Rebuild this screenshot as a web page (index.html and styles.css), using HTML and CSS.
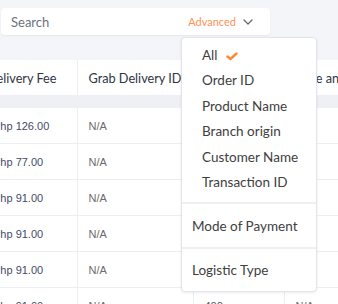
FILE: index.html
```html
<!DOCTYPE html>
<html>
<head>
<meta charset="utf-8">
<link rel="stylesheet" href="styles.css">
</head>
<body>
<div class="page">
  <div class="search">
    <span class="search-label">Search</span>
    <span class="advanced">Advanced</span>
    <svg class="chev" width="10" height="6" viewBox="0 0 10 6"><path d="M1 1 L5 5 L9 1" fill="none" stroke="#666" stroke-width="1.2" stroke-linecap="round" stroke-linejoin="round"/></svg>
  </div>

  <table class="grid">
    <colgroup>
      <col class="c1"><col class="c2"><col class="c3"><col class="c4">
    </colgroup>
    <thead>
      <tr class="head">
        <th>Delivery Fee</th><th>Grab Delivery ID</th><th>Quantity</th><th>Date and Time</th>
      </tr>
      <tr class="gap"><td colspan="4"></td></tr>
    </thead>
    <tbody>
      <tr><td class="fee">Php 126.00</td><td class="na">N/A</td><td>400</td><td class="na">N/A</td></tr>
      <tr><td class="fee">Php 77.00</td><td class="na">N/A</td><td>400</td><td class="na">N/A</td></tr>
      <tr><td class="fee">Php 91.00</td><td class="na">N/A</td><td>400</td><td class="na">N/A</td></tr>
      <tr><td class="fee">Php 91.00</td><td class="na">N/A</td><td>400</td><td class="na">N/A</td></tr>
      <tr><td class="fee">Php 91.00</td><td class="na">N/A</td><td>400</td><td class="na">N/A</td></tr>
      <tr><td class="fee">Php 91.00</td><td class="na">N/A</td><td>400</td><td class="na">N/A</td></tr>
    </tbody>
  </table>

  <div class="menu">
    <div class="group first">
      <div class="item">All <svg class="check" width="12" height="9" viewBox="0 0 12 9"><path d="M1.5 4.5 L4.5 7 L10.5 1.5" fill="none" stroke="#ff8a35" stroke-width="2.4" stroke-linecap="round" stroke-linejoin="round"/></svg></div>
      <div class="item">Order ID</div>
      <div class="item">Product Name</div>
      <div class="item">Branch origin</div>
      <div class="item">Customer Name</div>
      <div class="item">Transaction ID</div>
    </div>
    <div class="group single">
      <div class="item">Mode of Payment</div>
    </div>
    <div class="group single last">
      <div class="item">Logistic Type</div>
    </div>
  </div>
</div>
</body>
</html>
```

FILE: styles.css
```css
html, body {
  margin: 0;
  padding: 0;
}
body {
  background: #f3f5f9;
  font-family: Lato, "Noto Sans", sans-serif;
  width: 338px;
  height: 304px;
  overflow: hidden;
}
.page {
  position: relative;
  padding-top: 8px;
}
.search {
  margin-left: 1px;
  width: 269px;
  height: 27px;
  background: #fff;
  border-radius: 4px;
  box-shadow: 0 1px 2px rgba(0, 0, 0, 0.06);
  display: flex;
  align-items: center;
  box-sizing: border-box;
  padding-left: 10px;
}
.search-label {
  font-size: 13px;
  color: #6b7280;
  flex: 1;
}
.advanced {
  font-size: 11px;
  color: #ff9254;
  margin-right: 7px;
}
.chev {
  margin-right: 17px;
  margin-top: 1px;
}

.grid {
  margin-top: 25px;
  margin-left: -24px;
  border-collapse: collapse;
  table-layout: fixed;
  width: 425px;
}
.c1 { width: 101px; }
.c2 { width: 116px; }
.c3 { width: 91px; }
.c4 { width: 117px; }

.head th {
  height: 35px;
  background: #fff;
  font-weight: 400;
  font-size: 12.7px;
  color: #2f3542;
  text-align: left;
  padding: 0 0 0 11px;
  border-left: 1px solid #eceef2;
  white-space: nowrap;
  overflow: hidden;
}
.head th:first-child { border-left: none; }
.gap td {
  height: 13px;
  padding: 0;
  background: #eef0f4;
}
tbody td {
  height: 35px;
  background: #fff;
  padding: 0 0 0 11px;
  font-family: "Liberation Sans", Arial, sans-serif;
  font-size: 11px;
  color: #555;
  border-left: 1px solid #eceef2;
  border-bottom: 1px solid #eceef2;
  white-space: nowrap;
}
tbody td:first-child { border-left: none; padding-left: 17px; }
tbody td.fee { color: #3f4b66; }
tbody td.na { color: #6f6a6a; }

.menu {
  position: absolute;
  left: 181px;
  top: 37px;
  width: 136px;
  background: #fff;
  border: 1px solid #e3e5ea;
  border-radius: 4px;
  box-shadow: 0 1px 3px rgba(0, 0, 0, 0.08);
  box-sizing: border-box;
}
.group {
  border-bottom: 2px solid #eff0f3;
}
.group.last { border-bottom: none; }
.group.first {
  padding: 5px 0 7px 20px;
}
.group.first .item {
  height: 25.4px;
  line-height: 25.4px;
}
.group.single {
  padding-left: 10px;
  height: 43px;
  display: flex;
  align-items: center;
}
.group.last { height: 42px; }
.item {
  font-size: 13.5px;
  color: #404040;
  white-space: nowrap;
  display: flex;
  align-items: center;
}
.check {
  margin-left: 8px;
  margin-top: 1px;
}
```
